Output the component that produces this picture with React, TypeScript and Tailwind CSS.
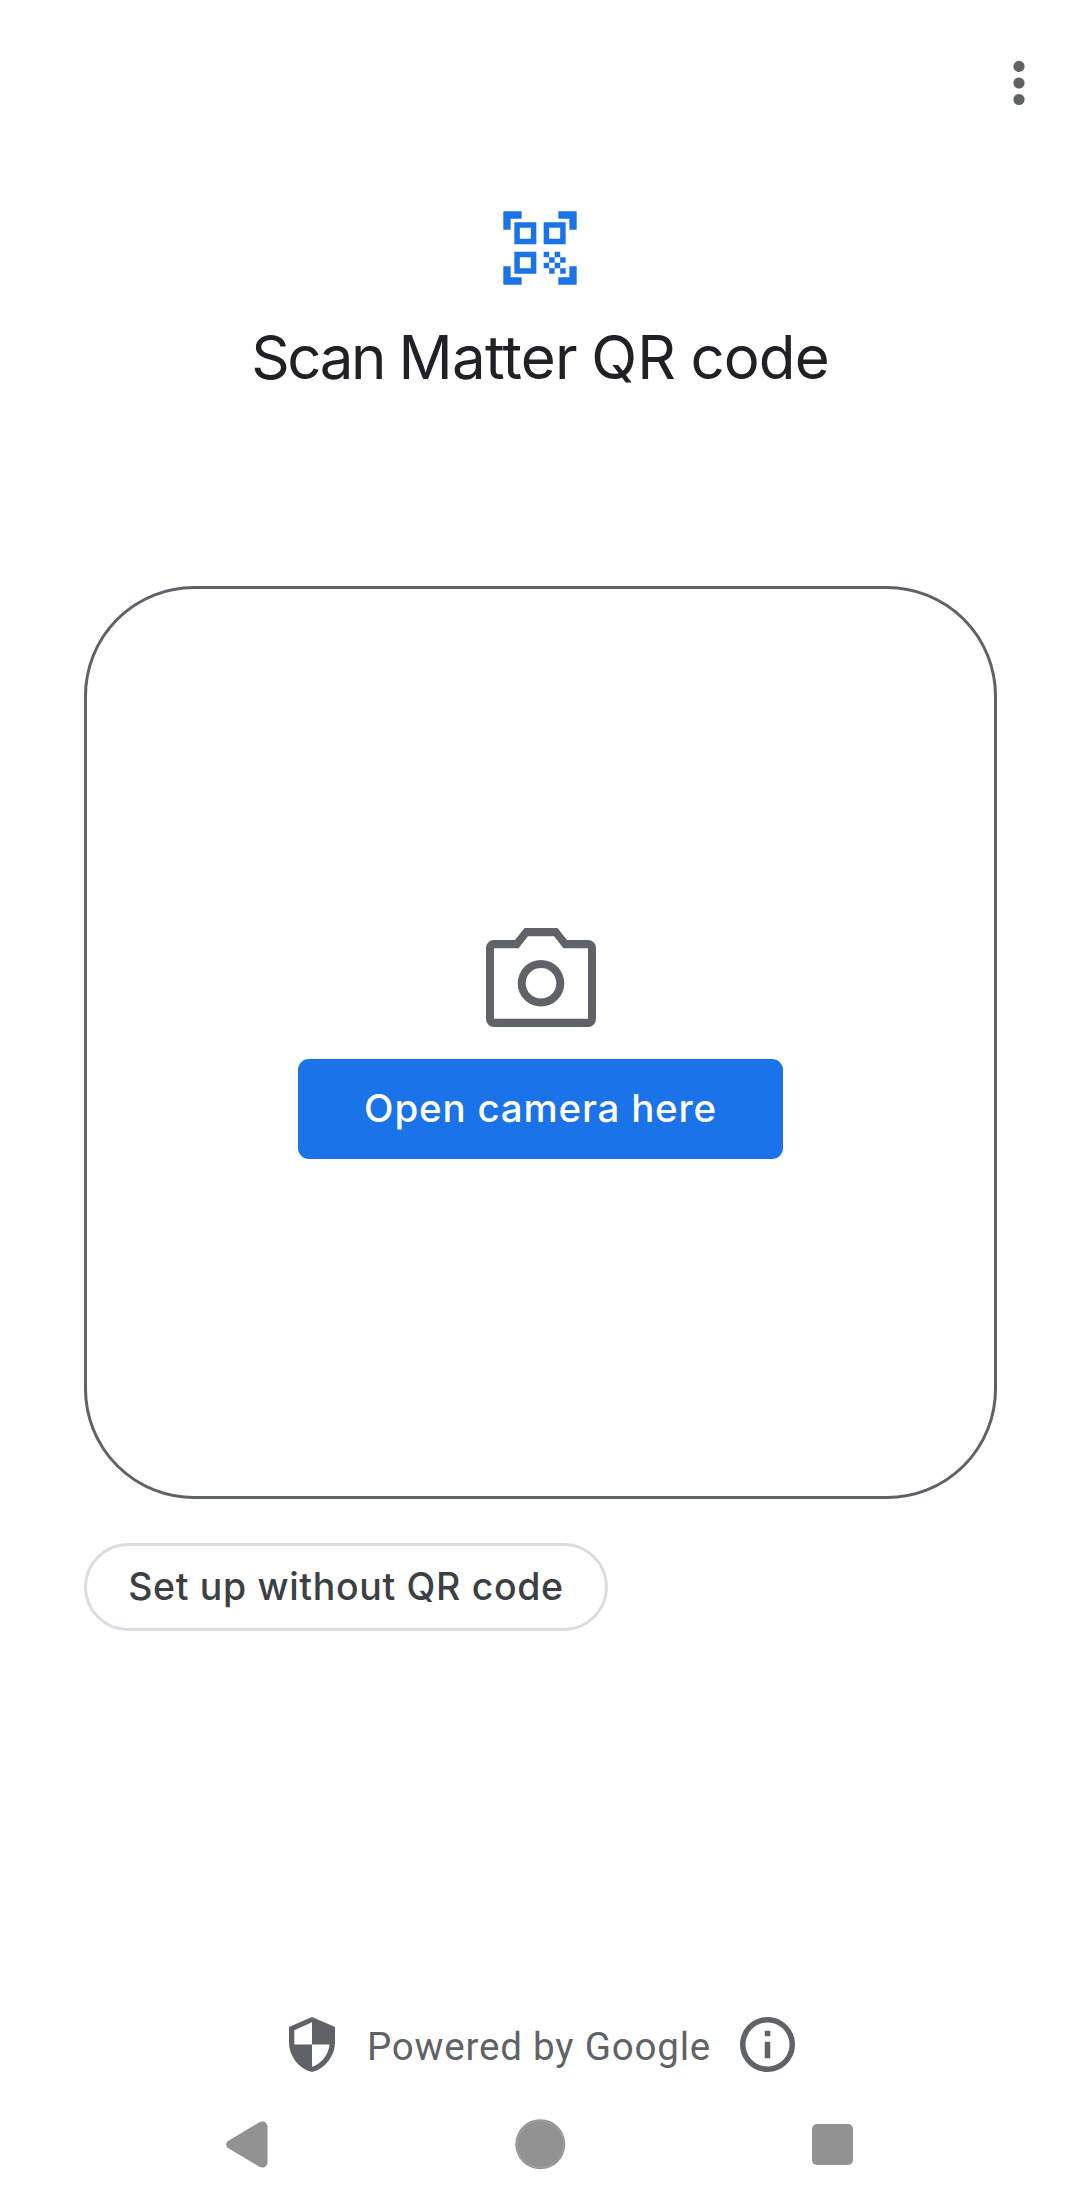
const MoreIcon = () => (
  <svg className="h-[46px] w-3" viewBox="0 0 12 46" fill="#5f6368">
    <circle cx="6" cy="6.4" r="5.6" />
    <circle cx="6" cy="23" r="5.6" />
    <circle cx="6" cy="39.5" r="5.6" />
  </svg>
);

const QrScannerIcon = () => (
  <svg className="h-[88px] w-[88px]" viewBox="0 0 24 24" fill="#1a73e8">
    <path d="M9.5 6.5v3h-3v-3h3M11 5H5v6h6V5zM9.5 14.5v3h-3v-3h3M11 13H5v6h6v-6zM17.5 6.5v3h-3v-3h3M19 5h-6v6h6V5zM13 13h1.5v1.5H13V13zM14.5 14.5H16V16h-1.5v-1.5zM16 13h1.5v1.5H16V13zM13 16h1.5v1.5H13V16zM14.5 17.5H16V19h-1.5v-1.5zM16 16h1.5v1.5H16V16zM17.5 14.5H19V16h-1.5v-1.5zM17.5 17.5H19V19h-1.5v-1.5zM22 7h-2V4h-3V2h5v5zM22 22v-5h-2v3h-3v2h5zM2 22h5v-2H4v-3H2v5zM2 2v5h2V4h3V2H2z" />
  </svg>
);

const CameraIcon = () => (
  <svg className="h-[99px] w-[110px]" viewBox="0 0 110 99" fill="#5f6368" fillRule="evenodd">
    <path d="M38.5 0H71.5L81 12H102A8 8 0 0 1 110 20V91A8 8 0 0 1 102 99H8A8 8 0 0 1 0 91V20A8 8 0 0 1 8 12H29ZM42 8.3L32.5 20.3H8V90.7H102V20.3H77.5L68 8.3Z" />
    <path d="M55 32A23.3 23.3 0 1 0 55 78.6A23.3 23.3 0 1 0 55 32ZM55 40A15.3 15.3 0 1 1 55 70.6A15.3 15.3 0 1 1 55 40Z" />
  </svg>
);

const ShieldIcon = () => (
  <svg className="h-[55px] w-[46px]" viewBox="0 0 46 55" fill="#5f6368" fillRule="evenodd">
    <path d="M23 0L46 10V25C46 39 36 52 23 55C10 52 0 39 0 25V10ZM23 5.3L5.3 13.2V27.5H23ZM23 27.5V49.8C32.5 47 39.2 38 40.7 27.5Z" />
  </svg>
);

const InfoIcon = () => (
  <svg className="h-[55px] w-[55px]" viewBox="0 0 20 20" fill="#5f6368">
    <path d="M9 5h2v2H9V5zm0 4h2v6H9V9zm1-9C4.48 0 0 4.48 0 10s4.48 10 10 10 10-4.48 10-10S15.52 0 10 0zm0 18c-4.41 0-8-3.59-8-8s3.59-8 8-8 8 3.59 8 8-3.59 8-8 8z" />
  </svg>
);

export default function App() {
  return (
    <div className="flex h-[2210px] w-[1080px] flex-col bg-white">
      <header className="flex h-[204px] items-start justify-end pt-[60px] pr-[55px]">
        <button aria-label="More options">
          <MoreIcon />
        </button>
      </header>

      <section className="flex h-[382px] flex-col items-center">
        <QrScannerIcon />
        <h1 className="mt-[25px] font-['Inter',sans-serif] text-[60px] leading-[80px] font-normal tracking-[-1.6px] whitespace-nowrap text-[#202124] [word-spacing:-1px]">
          <span className="tracking-[-2.4px]">Scan</span> <span className="tracking-[-0.7px]">Matter</span>{" "}
          <span className="tracking-[0.2px]">QR</span> <span className="tracking-[-0.9px]">code</span>
        </h1>
      </section>

      <main className="mr-[83px] ml-[84px] flex h-[913px] shrink-0 flex-col items-center rounded-[110px] border-3 border-[#5f6368] pt-[338.5px]">
        <CameraIcon />
        <button className="mt-[32.5px] flex h-[100px] w-[485px] items-center justify-center rounded-[11px] bg-[#1a73e8] font-['Inter',sans-serif] text-[38.5px] font-medium tracking-[0.8px] whitespace-nowrap text-white">
          Open camera here
        </button>
      </main>

      <button className="mt-11 ml-[84px] flex h-[88px] w-[524px] shrink-0 items-center justify-center rounded-full border-3 border-[#dadce0] font-['Inter',sans-serif] text-[37.5px] font-medium tracking-[0.65px] whitespace-nowrap text-[#3c4043]">
        Set up without QR code
      </button>

      <footer className="mt-auto">
        <div className="flex h-[55px] items-center pl-[289px]">
          <ShieldIcon />
          <span className="mt-1 ml-8 w-[373px] font-['Roboto',sans-serif] text-[38.5px] leading-[46px] tracking-[0.8px] whitespace-nowrap text-[#5f6368]">
            Powered by Google
          </span>
          <InfoIcon />
        </div>
        <nav className="mt-[47px] flex h-[91px] items-start pl-[226px]">
          <svg className="mt-[2px] h-[47px] w-[42px]" viewBox="0 0 42 47" fill="#929292">
            <path d="M2 20L33 1.5C37-.8 41.5 1 41.5 6V41C41.5 46 37 47.8 33 45.5L2 27C-.6 25-.6 22 2 20Z" />
          </svg>
          <svg className="ml-[247px] h-[51px] w-[51px]" viewBox="0 0 51 51">
            <circle cx="25.3" cy="25.2" r="25" fill="#929292" />
            <circle cx="25.3" cy="25.2" r="23.3" fill="none" stroke="#a8a8a8" strokeWidth="0.8" />
          </svg>
          <span className="mt-[5px] ml-[246px] h-[41px] w-[41px] rounded-[5px] bg-[#929292]" />
        </nav>
      </footer>
    </div>
  );
}
